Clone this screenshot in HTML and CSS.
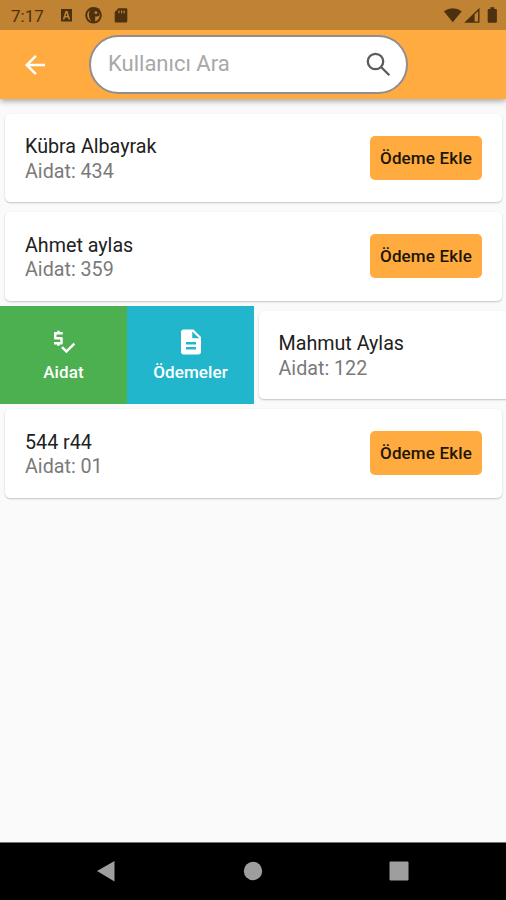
FILE: index.html
```html
<!DOCTYPE html>
<html lang="tr">
<head>
<meta charset="utf-8">
<title>Aidat</title>
<link rel="stylesheet" href="styles.css">
</head>
<body>
<div class="screen">
  <header class="top">
    <div class="status">
      <span class="clock">7:17</span>
      <svg class="notifications" width="72" height="18" viewBox="0 0 72 18">
        <path fill-rule="evenodd" d="M1 2h11v12.500H1zM2.800 12.500h1.600l.7-2h2.800l.7 2h1.600L7.500 4h-2zM5.600 9l.9-2.900.9 2.900z"/>
        <circle cx="33.500" cy="8.300" r="7.300" fill="none" stroke="#4d310e" stroke-width="2"/>
        <path d="M29.500 3.500q2-2 4-2h6V7q0 2.500-2.500 2.500h-1.800v5.500h-3.500q-4-5-2.200-11.500z"/>
        <path d="M34.500 4.500h2.700v2.300h-2.700z" fill="#c08233"/>
        <path fill-rule="evenodd" d="M58.500 1.200H66q1.300 0 1.300 1.300v11.700q0 1.300-1.300 1.300H56q-1.300 0-1.300-1.300V5zM58.400 3.600v2.600h1.200V3.600zm2.600 0v2.600h1.200V3.600zm2.600 0v2.600h1.200V3.600z"/>
      </svg>
      <svg class="system" width="56" height="18" viewBox="0 0 56 18">
        <path d="M.8 4.300Q9.800-1.900 18.800 4.300L9.800 15.200z"/>
        <path fill-rule="evenodd" d="M36.500.8v15H21.200zM31.600 7.500v6.900h3.500V4.100z"/>
        <path d="M47.300.3h4v1.600h1.500q1.100 0 1.100 1.100v11.700q0 1.100-1.100 1.100h-7q-1.100 0-1.100-1.100V3q0-1.100 1.100-1.100h1.500z"/>
      </svg>
    </div>
    <div class="appbar">
      <svg class="back" viewBox="0 0 24 24"><path d="M20 11H7.830l5.590-5.590L12 4l-8 8 8 8 1.410-1.410L7.830 13H20v-2z"/></svg>
      <div class="search">
        <span>Kullanıcı Ara</span>
        <svg viewBox="0 0 31 31"><circle cx="12.500" cy="12.500" r="7.700"/><path d="m18.300 18.300 8 8"/></svg>
      </div>
    </div>
  </header>
  <main class="list">
    <div class="row">
      <div class="card">
        <div class="info"><div class="name">Kübra Albayrak</div><div class="due">Aidat: 434</div></div>
        <button class="pay">Ödeme Ekle</button>
      </div>
    </div>
    <div class="row">
      <div class="card">
        <div class="info"><div class="name">Ahmet aylas</div><div class="due">Aidat: 359</div></div>
        <button class="pay">Ödeme Ekle</button>
      </div>
    </div>
    <div class="row open">
      <div class="action dues">
        <svg viewBox="0 0 24 24"><path d="M11 13V9c0-.55-.45-1-1-1H6V6h5V4H8.500V3h-2v1H5c-.55 0-1 .45-1 1v4c0 .55.45 1 1 1h4v2H4v2h2.500v1h2v-1H10c.55 0 1-.45 1-1zM19.590 12.520l-5.660 5.650-2.830-2.830-1.410 1.420L13.930 21 21 13.930z"/></svg>
        <span>Aidat</span>
      </div>
      <div class="action payments">
        <svg viewBox="0 0 24 24"><path d="M14 2H6c-1.100 0-2 .9-2 2v16c0 1.100.9 2 2 2h12c1.100 0 2-.9 2-2V8l-6-6zm2 16H8v-2h8v2zm0-4H8v-2h8v2zm-3-5V3.500L18.500 9H13z"/></svg>
        <span>Ödemeler</span>
      </div>
      <div class="card">
        <div class="info"><div class="name">Mahmut Aylas</div><div class="due">Aidat: 122</div></div>
      </div>
    </div>
    <div class="row">
      <div class="card">
        <div class="info"><div class="name">544 r44</div><div class="due">Aidat: 01</div></div>
        <button class="pay">Ödeme Ekle</button>
      </div>
    </div>
  </main>
  <nav class="navbar">
    <svg viewBox="0 0 20 22"><path d="M1 11 18.500 1v20.500z"/></svg>
    <svg viewBox="0 0 20 22"><circle cx="10" cy="11" r="9.200"/></svg>
    <svg viewBox="0 0 20 22"><rect x=".5" y="1.500" width="19" height="19" rx="1"/></svg>
  </nav>
</div>
</body>
</html>
```
FILE: styles.css
```css
* { box-sizing: border-box; }
body { margin: 0; font-family: Roboto, sans-serif; }
.screen { width: 506px; height: 900px; display: flex; flex-direction: column; background: #fafafa; overflow: hidden; }
.top { height: 99px; flex: none; background: #ffab40; box-shadow: 0 2px 6px rgba(0, 0, 0, .36); z-index: 1; }
.status { height: 30px; display: flex; align-items: center; background: #c08233; color: #4d310e; fill: #4d310e; padding: 1px 7px 0 11px; }
.clock { width: 49px; font-size: 17px; line-height: 20px; }
.system { margin-left: auto; }
.appbar { height: 69px; display: flex; align-items: center; padding-left: 20px; }
.back { width: 30px; height: 30px; fill: #fff; }
.search { width: 319px; height: 59px; margin-left: 39px; border: 2px solid #8e8e93; border-radius: 30px; background: #fff; display: flex; align-items: center; justify-content: space-between; padding: 0 12px 0 17px; }
.search span { font-size: 22px; line-height: 26px; color: #a8a8a8; margin-top: -2px; }
.search svg { width: 31px; height: 31px; fill: none; stroke: #5b5b5b; stroke-width: 2.300px; }
.list { flex: 1; padding-top: 10px; }
.row { height: 98.4px; display: flex; padding: 5px 4px 5px 5px; }
.card { flex: 1; background: #fff; border-radius: 5px; box-shadow: 0 1px 2px rgba(0, 0, 0, .22); display: flex; align-items: center; justify-content: space-between; padding: 0 20px 1px; }
.info { padding-top: 4.500px; }
.name, .due { font-size: 19.700px; line-height: 24.600px; }
.name { color: #212121; }
.due { color: #7a7a7a; }
.pay { width: 112px; height: 44px; padding: 0; border: 0; border-radius: 5px; background: #ffab40; color: #201608; font: 500 17px/20px Roboto, sans-serif; letter-spacing: .15px; white-space: nowrap; }
.row.open { padding: 0; }
.open .card { margin: 5px -10px 5px 4.500px; }
.action { width: 127px; flex: none; display: flex; flex-direction: column; align-items: center; padding-top: 21px; color: #fff; fill: #fff; font-size: 17px; font-weight: 500; line-height: 20px; letter-spacing: .1px; }
.action svg { width: 30px; height: 30px; margin-bottom: 5px; }
.dues { background: #4caf50; }
.payments { background: #22b6cd; }
.navbar { height: 58px; flex: none; background: #000; border-top: 1px solid #777; display: flex; justify-content: space-between; align-items: center; padding: 0 97px 1px 96px; fill: #9e9e9e; }
.navbar svg { width: 20px; height: 22px; }
```
